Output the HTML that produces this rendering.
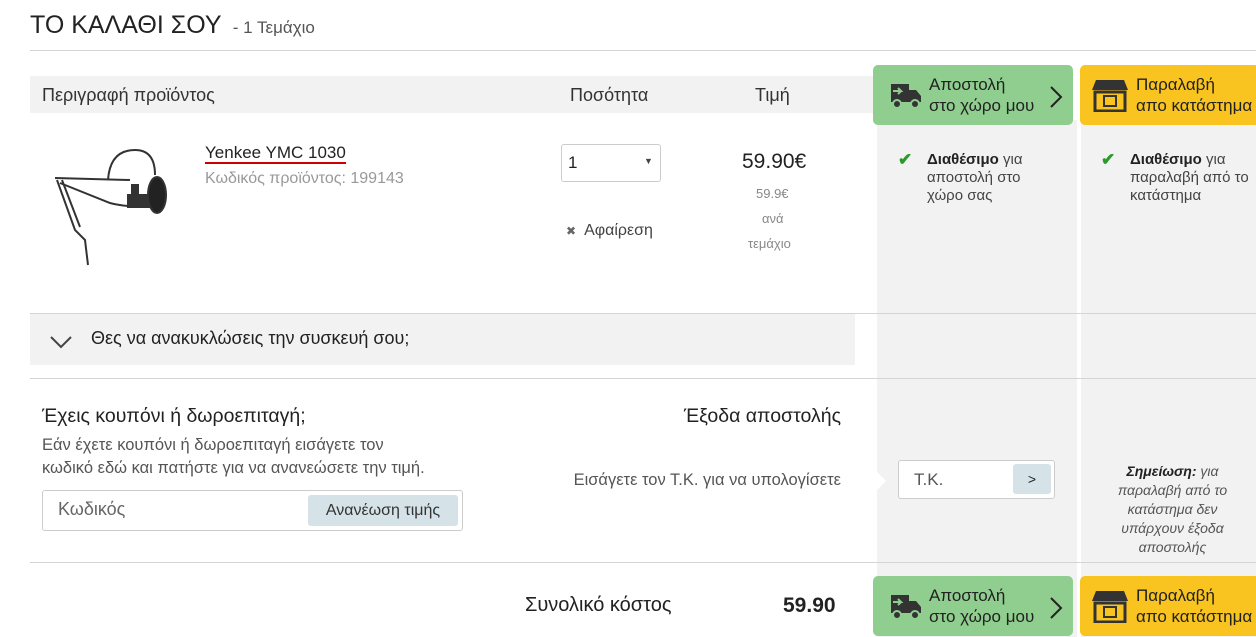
<!DOCTYPE html>
<html><head><meta charset="utf-8"><style>
*{margin:0;padding:0;box-sizing:border-box}
body{width:1256px;height:637px;overflow:hidden;background:#fff;font-family:"Liberation Sans Narrow","Liberation Sans",sans-serif;color:#222;position:relative}
.a{position:absolute;white-space:nowrap}
.hl{position:absolute;height:1px;background:#d4d4d4}
.col{position:absolute;background:#f2f2f2}
.btn{position:absolute;height:60px;border-radius:5px;font-size:17px;line-height:21px;color:#222}
.g{background:#8fce8f}.y{background:#f9c320}
.btn .t{position:absolute;left:56px;top:9px}
.chk{color:#2a9a2a;font-size:17px;font-weight:bold}
.av{position:absolute;font-size:15px;line-height:18px;color:#444}
</style></head><body>
<div class="a" style="left:30px;top:11px;font-size:25px;color:#222">ΤΟ ΚΑΛΑΘΙ ΣΟΥ <span style="font-size:17px;color:#555">&nbsp;- 1 Τεμάχιο</span></div>
<div class="hl" style="left:30px;top:50px;width:1226px"></div>

<div class="col" style="left:877px;top:120px;width:200px;height:517px"></div>
<div class="col" style="left:1081px;top:120px;width:175px;height:517px"></div>
<div style="position:absolute;left:1078px;top:120px;height:517px;border-left:2px dashed #fff"></div>

<div style="position:absolute;left:30px;top:76px;width:847px;height:37px;background:#f2f2f2"></div>
<div class="a" style="left:42px;top:85px;font-size:18px;color:#333">Περιγραφή προϊόντος</div>
<div class="a" style="left:570px;top:85px;font-size:18px;color:#333">Ποσότητα</div>
<div class="a" style="left:755px;top:85px;font-size:18px;color:#333">Τιμή</div>

<svg style="position:absolute;left:50px;top:145px" width="125" height="125" viewBox="0 0 125 125" fill="none" stroke="#333" stroke-width="2">
<path d="M5 33 L80 35"/><path d="M7 35 L25 85 L35 95 L38 120"/><path d="M12 35 L30 82"/><path d="M10 38 L60 58 Q75 62 100 62"/><path d="M58 35 Q60 5 85 5 Q105 5 105 30"/>
<ellipse cx="107" cy="50" rx="9" ry="18" fill="#222"/><rect x="78" y="50" width="20" height="12" fill="#333"/><rect x="82" y="40" width="6" height="12" fill="#333"/>
</svg>
<div class="a" style="left:205px;top:144px;font-size:17px;color:#222;border-bottom:2px solid #c00;line-height:18px">Yenkee YMC 1030</div>
<div class="a" style="left:205px;top:170px;font-size:16px;color:#999">Κωδικός προϊόντος: 199143</div>

<div style="position:absolute;left:561px;top:144px;width:100px;height:38px;border:1px solid #ccc;border-radius:3px"></div>
<div class="a" style="left:568px;top:153px;font-size:17px">1</div>
<div class="a" style="left:644px;top:156px;font-size:9px;color:#444">▼</div>
<div class="a" style="left:566px;top:222px;font-size:16px;color:#444"><span style="font-size:12px;color:#666">✖</span>&nbsp; Αφαίρεση</div>

<div class="a" style="left:742px;top:150px;font-size:21px;color:#222">59.90€</div>
<div class="a" style="left:756px;top:186px;font-size:13px;color:#888">59.9€</div>
<div class="a" style="left:762px;top:211px;font-size:13px;color:#888">ανά</div>
<div class="a" style="left:748px;top:236px;font-size:13px;color:#888">τεμάχιο</div>

<div class="btn g" style="left:873px;top:65px;width:200px"><svg style="position:absolute;left:16px;top:17px" width="34" height="28" viewBox="0 0 34 28"><path d="M2 2h18v18H2z M20 8h7l5 6v6H20z" fill="#333"/><path d="M4 9h8l-3-3M12 9l-3 3" stroke="#8fce8f" stroke-width="2" fill="none"/><circle cx="8" cy="22" r="4" fill="#333" stroke="#8fce8f" stroke-width="2"/><circle cx="26" cy="22" r="4" fill="#333" stroke="#8fce8f" stroke-width="2"/></svg><div class="t">Αποστολή<br>στο χώρο μου</div><svg style="position:absolute;left:176px;top:20px" width="14" height="24"><path d="M2 2l10 10-10 10" stroke="#222" stroke-width="2" fill="none"/></svg></div>
<div class="btn y" style="left:1080px;top:65px;width:180px"><svg style="position:absolute;left:12px;top:15px" width="36" height="32" viewBox="0 0 36 32"><path d="M4 0h28l4 10H0z" fill="#333"/><rect x="3" y="12" width="30" height="19" fill="none" stroke="#333" stroke-width="3"/><rect x="12" y="16" width="12" height="10" fill="none" stroke="#333" stroke-width="2"/></svg><div class="t">Παραλαβή<br>απο κατάστημα</div></div>

<div class="a" style="left:898px;top:150px"><span class="chk">✔</span></div>
<div class="av" style="left:927px;top:151px"><b style="color:#222">Διαθέσιμο</b> για<br>αποστολή στο<br>χώρο σας</div>
<div class="a" style="left:1101px;top:150px"><span class="chk">✔</span></div>
<div class="av" style="left:1130px;top:151px"><b style="color:#222">Διαθέσιμο</b> για<br>παραλαβή από το<br>κατάστημα</div>

<div class="hl" style="left:30px;top:313px;width:1226px"></div>
<div style="position:absolute;left:30px;top:314px;width:825px;height:51px;background:#f2f2f2"></div>
<svg style="position:absolute;left:50px;top:335px" width="22" height="14"><path d="M1 2l10 10 10-10" stroke="#444" stroke-width="2" fill="none"/></svg>
<div class="a" style="left:91px;top:328px;font-size:18px;color:#222">Θες να ανακυκλώσεις την συσκευή σου;</div>
<div class="hl" style="left:30px;top:378px;width:1226px"></div>

<div class="a" style="left:42px;top:405px;font-size:19.5px">Έχεις κουπόνι ή δωροεπιταγή;</div>
<div class="a" style="left:42px;top:434px;font-size:16.5px;color:#555;line-height:23px">Εάν έχετε κουπόνι ή δωροεπιταγή εισάγετε τον<br>κωδικό εδώ και πατήστε για να ανανεώσετε την τιμή.</div>
<div style="position:absolute;left:42px;top:490px;width:421px;height:41px;border:1px solid #ccc;border-radius:3px"></div>
<div class="a" style="left:58px;top:499px;font-size:18px;color:#666">Κωδικός</div>
<div style="position:absolute;left:308px;top:495px;width:150px;height:31px;background:#d5e3e8;border-radius:3px;font-size:16px;color:#333;text-align:center;line-height:31px">Ανανέωση τιμής</div>

<div class="a" style="right:415px;top:405px;font-size:19.5px">Έξοδα αποστολής</div>
<div class="a" style="right:415px;top:471px;font-size:16.5px;color:#555">Εισάγετε τον Τ.Κ. για να υπολογίσετε</div>

<div style="position:absolute;left:898px;top:460px;width:157px;height:39px;background:#fff;border:1px solid #ccc;border-radius:3px"></div>
<div class="a" style="left:914px;top:470px;font-size:17px;color:#555">Τ.Κ.</div>
<div style="position:absolute;left:1013px;top:464px;width:38px;height:30px;background:#d5e3e8;border-radius:3px;text-align:center;line-height:30px;font-size:14px">&gt;</div>
<div style="position:absolute;left:877px;top:472px;width:0;height:0;border-top:9px solid transparent;border-bottom:9px solid transparent;border-left:9px solid #fff"></div>

<div class="a" style="left:1110px;top:462px;font-size:14px;line-height:19px;color:#555;font-style:italic;text-align:center;width:125px"><b style="color:#222">Σημείωση:</b> για<br>παραλαβή από το<br>κατάστημα δεν<br>υπάρχουν έξοδα<br>αποστολής</div>

<div class="hl" style="left:30px;top:562px;width:1226px"></div>
<div class="a" style="left:525px;top:594px;font-size:20px">Συνολικό κόστος</div>
<div class="a" style="left:783px;top:594px;font-size:21px;font-weight:bold">59.90</div>

<div class="btn g" style="left:873px;top:576px;width:200px"><svg style="position:absolute;left:16px;top:17px" width="34" height="28" viewBox="0 0 34 28"><path d="M2 2h18v18H2z M20 8h7l5 6v6H20z" fill="#333"/><path d="M4 9h8l-3-3M12 9l-3 3" stroke="#8fce8f" stroke-width="2" fill="none"/><circle cx="8" cy="22" r="4" fill="#333" stroke="#8fce8f" stroke-width="2"/><circle cx="26" cy="22" r="4" fill="#333" stroke="#8fce8f" stroke-width="2"/></svg><div class="t">Αποστολή<br>στο χώρο μου</div><svg style="position:absolute;left:176px;top:20px" width="14" height="24"><path d="M2 2l10 10-10 10" stroke="#222" stroke-width="2" fill="none"/></svg></div>
<div class="btn y" style="left:1080px;top:576px;width:180px"><svg style="position:absolute;left:12px;top:15px" width="36" height="32" viewBox="0 0 36 32"><path d="M4 0h28l4 10H0z" fill="#333"/><rect x="3" y="12" width="30" height="19" fill="none" stroke="#333" stroke-width="3"/><rect x="12" y="16" width="12" height="10" fill="none" stroke="#333" stroke-width="2"/></svg><div class="t">Παραλαβή<br>απο κατάστημα</div></div>
</body></html>
